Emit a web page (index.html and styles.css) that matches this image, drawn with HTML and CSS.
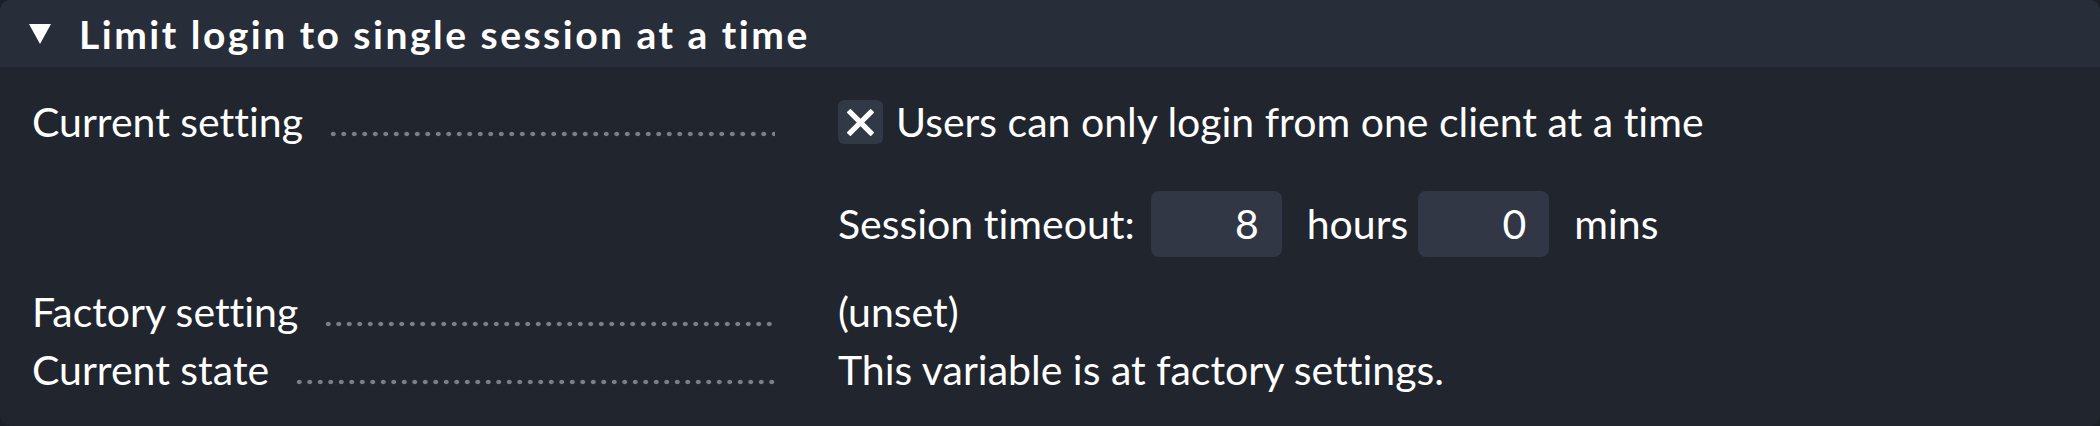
FILE: index.html
```html
<!DOCTYPE html>
<html>
<head>
	<title>Global settings - Limit login</title>
	<meta charset="UTF-8">
	<link rel="stylesheet" href="styles.css">
</head>
<body>

<div class="panel">
	<div class="head">
		<svg class="toggle" viewBox="0 0 22 20" width="22" height="20"><polygon points="0,0 22,0 11,20" fill="#fff"/></svg>
		<span class="title">Limit login to single session at a time</span>
	</div>
	<div class="content">
		<div class="row">
			<div class="label"><span>Current setting</span><span class="dots"></span></div>
			<div class="value">
				<div class="line">
					<span class="check"><svg viewBox="0 0 24 24" width="27" height="27"><path d="M3 3 L21 21 M21 3 L3 21" stroke="#fff" stroke-width="4.6" stroke-linecap="square"/></svg></span>
					<span>Users can only login from one client at a time</span>
				</div>
				<div class="line timeout">
					<span>Session timeout:</span>
					<span class="num">8</span>
					<span>hours</span>
					<span class="num">0</span>
					<span>mins</span>
				</div>
			</div>
		</div>
		<div class="row">
			<div class="label"><span>Factory setting</span><span class="dots"></span></div>
			<div class="value">(unset)</div>
		</div>
		<div class="row">
			<div class="label"><span>Current state</span><span class="dots"></span></div>
			<div class="value">This variable is at factory settings.</div>
		</div>
	</div>
</div>

</body>
</html>
```

FILE: styles.css
```css
html
{
	background:#1b1f26;
}
body
{
	margin:0;
	font-family:Lato, "Open Sans", sans-serif;
	font-size:41px;
	font-variant-ligatures:none;
	color:#fff;
}
.panel
{
	background:#20252e;
	border-radius:10px;
	overflow:hidden;
	height:426px;
}
.head
{
	background:#282e39;
	height:67px;
	display:flex;
	align-items:center;
	padding-left:29px;
}
.toggle
{
	margin-right:28px;
}
.title
{
	font-weight:bold;
	font-size:39px;
	letter-spacing:2.5px;
}
.content
{
	padding:33px 0 0 32px;
}
.row
{
	display:grid;
	grid-template-columns:743px auto;
	column-gap:63px;
	align-items:start;
	line-height:58px;
}
.row:first-child
{
	line-height:44px;
	margin-bottom:26px;
}
.label
{
	display:flex;
}
.dots
{
	flex:1;
	margin-left:25px;
	background-image:radial-gradient(circle, #7b808a 2px, transparent 2.6px);
	background-size:10.5px 6px;
	background-repeat:repeat-x;
	background-position:0 calc(100% - 14px);
}
.row:first-child .dots
{
	background-position:0 calc(100% - 7px);
}
.line
{
	display:flex;
	align-items:center;
	height:44px;
}
.check
{
	width:45px;
	height:44px;
	border-radius:6px;
	background:#323946;
	display:flex;
	align-items:center;
	justify-content:center;
	margin-right:13px;
}
.timeout
{
	margin-top:47px;
	height:66px;
}
.num
{
	width:131px;
	height:66px;
	line-height:66px;
	box-sizing:border-box;
	text-align:right;
	padding-right:23px;
	background:#313745;
	border-radius:8px;
	margin:0 25px 0 16px;
}
.num + span + .num
{
	margin-left:10px;
}
```
